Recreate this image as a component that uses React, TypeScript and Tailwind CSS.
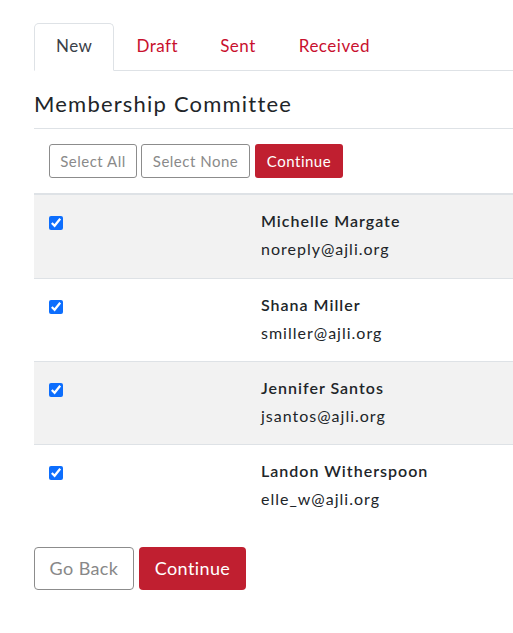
import React from "react";

const rows = [
  { name: "Michelle Margate", email: "noreply@ajli.org" },
  { name: "Shana Miller", email: "smiller@ajli.org" },
  { name: "Jennifer Santos", email: "jsantos@ajli.org" },
  { name: "Landon Witherspoon", email: "elle_w@ajli.org" },
];

export default function App() {
  return (
    <div
      className="w-[513px] h-[633px] overflow-hidden bg-white text-[#212529] pl-[34px] pt-[23px]"
      style={{ fontFamily: "Lato, 'Noto Sans', sans-serif" }}
    >
      <div className="w-[600px]">
        <ul className="flex border-b border-[#dee2e6] h-[48px] tracking-[0.5px]">
          <li className="px-[21px] border border-[#dee2e6] border-b-white rounded-t-[5px] -mb-px flex items-center pb-[2px] text-[17px] text-[#3a4048]">
            New
          </li>
          <li className="pl-[22px] pr-[21px] flex items-center pb-[2px] text-[17px] text-[#c8102e]">Draft</li>
          <li className="px-[21px] flex items-center pb-[2px] text-[17px] text-[#c8102e]">Sent</li>
          <li className="px-[22px] flex items-center pb-[2px] text-[17px] text-[#c8102e]">Received</li>
        </ul>
        <h2 className="text-[22px] leading-[30px] tracking-[1.2px] pt-[18px] pb-[9px] border-b border-[#dee2e6] font-normal">
          Membership Committee
        </h2>
        <div className="flex gap-[4px] pl-[15px] pt-[15px] pb-[15px] tracking-[0.5px]">
          <button className="h-[34px] w-[88px] border border-[#8c8c8c] rounded-[3px] text-[15px] text-[#8a8a8a]">
            Select All
          </button>
          <button className="h-[34px] w-[109px] border border-[#8c8c8c] rounded-[3px] text-[15px] text-[#8a8a8a]">
            Select None
          </button>
          <button className="h-[34px] w-[88px] ml-px rounded-[3px] text-[15px] text-white bg-[#c01f30]">
            Continue
          </button>
        </div>
        <div className="border-t-2 border-[#dee2e6]">
          {rows.map((r, i) => (
            <div
              key={r.email}
              className={`flex h-[83px] ${i > 0 ? "border-t border-[#dee2e6]" : ""} ${
                i % 2 === 0 ? "bg-[#f2f2f2]" : "bg-white"
              }`}
            >
              <div className="w-[227px] pl-[15px] pt-[17px]">
                <input
                  type="checkbox"
                  defaultChecked
                  className="w-[14px] h-[14px] m-0 accent-[#0d6efd]"
                />
              </div>
              <div className="pt-[12px] text-[16px] leading-[28px] tracking-[1px]">
                <div className="font-semibold">{r.name}</div>
                <div>{r.email}</div>
              </div>
            </div>
          ))}
        </div>
        <div className="flex gap-[5px] pt-[20px] tracking-[0.4px]">
          <button className="h-[43px] w-[100px] border border-[#8c8c8c] rounded-[4px] text-[18px] text-[#888]">
            Go Back
          </button>
          <button className="h-[43px] w-[107px] rounded-[4px] text-[18px] text-white bg-[#c01f30]">
            Continue
          </button>
        </div>
      </div>
    </div>
  );
}
